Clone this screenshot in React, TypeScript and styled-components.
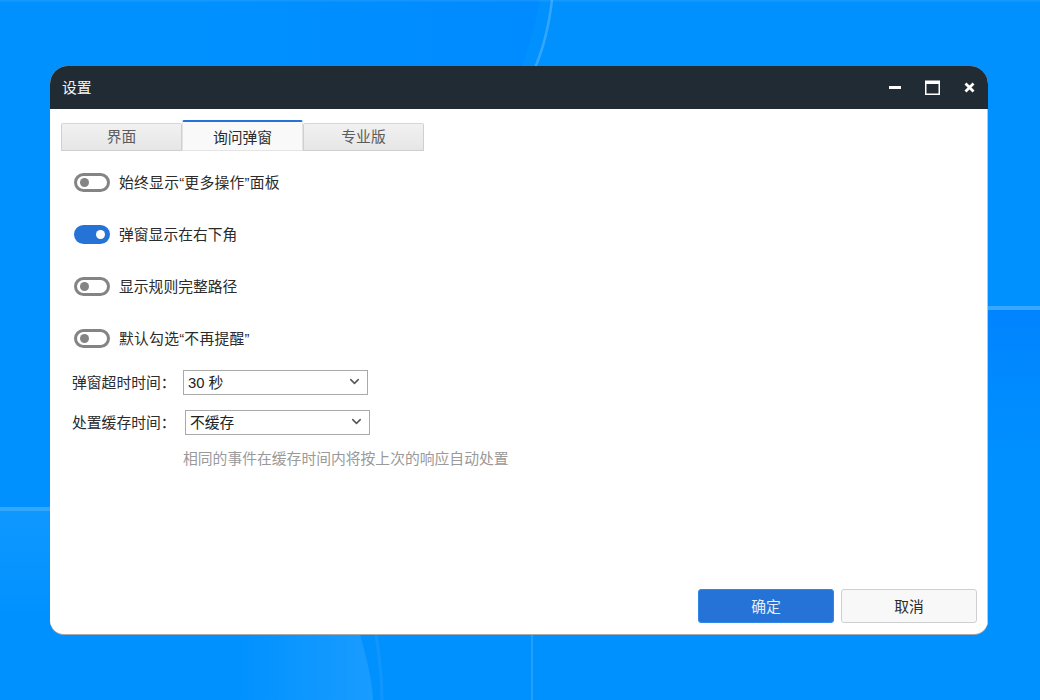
import styled, { createGlobalStyle } from "styled-components";
import { ChevronDown } from "lucide-react";

const GlobalStyle = createGlobalStyle`
  html, body {
    margin: 0;
    padding: 0;
    width: 100%;
    height: 100%;
    overflow: hidden;
  }
  body {
    font-family: "Liberation Sans", "Noto Sans CJK SC", sans-serif;
    font-size: 14.8px;
    color: #2b2b2b;
  }
  * {
    box-sizing: border-box;
  }
`;

const Desktop = styled.div`
  position: relative;
  width: 1040px;
  height: 700px;
  padding: 66px 52px 66px 50px;
  background: #0091ff;
  overflow: hidden;
`;

const Wallpaper = styled.svg`
  position: absolute;
  inset: 0;
  width: 1040px;
  height: 700px;
`;

const Dialog = styled.div`
  position: relative;
  display: flex;
  flex-direction: column;
  height: 568px;
  background: #fff;
  border-radius: 18px 18px 14px 14px;
  box-shadow: 0 1px 0 #a9a9a9;
  overflow: hidden;
`;

const TitleBar = styled.div`
  display: flex;
  align-items: center;
  justify-content: space-between;
  flex: none;
  height: 43px;
  padding: 0 12px;
  background: #212b33;
  color: #f4f4f4;
`;

const WindowTitle = styled.div`
  padding-top: 2px;
  line-height: 41px;
`;

const WindowControls = styled.div`
  display: flex;
  align-items: center;
  gap: 21px;
`;

const ControlIcon = styled.svg`
  display: block;
  width: 15px;
  height: 15px;
  color: #fff;
`;

const Body = styled.div`
  display: flex;
  flex-direction: column;
  flex: 1;
  padding: 11px 10px 11px 11px;
  border-right: 1px solid #c4c4c4;
`;

const TabBar = styled.div`
  display: flex;
  align-items: flex-end;
  height: 31px;
`;

const Tab = styled.div<{ $active?: boolean }>`
  width: 121px;
  height: ${(props) => (props.$active ? "31px" : "28px")};
  display: flex;
  align-items: center;
  justify-content: center;
  padding-bottom: ${(props) => (props.$active ? "0" : "3px")};
  border: 1px solid ${(props) => (props.$active ? "#e4e4e4" : "#cfcfcf")};
  border-top: ${(props) => (props.$active ? "2px solid #2673d8" : "1px solid #d6d6d6")};
  border-radius: 2px 2px 0 0;
  background: ${(props) =>
    props.$active ? "#f9f9f9" : "linear-gradient(#f1f1f1, #e6e6e6)"};
  color: ${(props) => (props.$active ? "#2b2b2b" : "#5c5c5c")};
`;

const Settings = styled.div`
  display: flex;
  flex-direction: column;
  flex: 1;
`;

const ToggleList = styled.div`
  display: flex;
  flex-direction: column;
  gap: 32px;
  padding: 21px 0 0 13px;
`;

const ToggleRow = styled.div`
  display: flex;
  align-items: center;
  gap: 9px;
  height: 20px;
`;

const ToggleLabel = styled.span<{ $quoted?: boolean }>`
  padding-top: 2px;
  line-height: 20px;
  letter-spacing: ${(props) => (props.$quoted ? "0.25px" : "0")};
`;

const Toggle = styled.div<{ $on?: boolean }>`
  position: relative;
  width: 36px;
  height: 19px;
  border-radius: 10px;
  border: 3px solid ${(props) => (props.$on ? "#2673d8" : "#848484")};
  background: ${(props) => (props.$on ? "#2673d8" : "#fff")};

  &::after {
    content: "";
    position: absolute;
    top: 2px;
    left: ${(props) => (props.$on ? "19px" : "3px")};
    width: 9px;
    height: 9px;
    border-radius: 50%;
    background: ${(props) => (props.$on ? "#fff" : "#848484")};
  }
`;

const FormRows = styled.div`
  display: flex;
  flex-direction: column;
  gap: 15px;
  padding: 22px 0 0 11px;
`;

const FormRow = styled.div`
  display: flex;
  align-items: center;
  height: 25px;
`;

const FieldLabel = styled.div`
  width: 96px;
  padding-bottom: 2px;
  white-space: nowrap;
`;

const Select = styled.div<{ $offset: number }>`
  display: flex;
  align-items: center;
  justify-content: space-between;
  width: 185px;
  height: 25px;
  margin-left: ${(props) => props.$offset}px;
  padding: 0 5px 2px 4px;
  border: 1px solid #a9a9a9;
  background: #fff;
  color: #222;

  svg {
    width: 15px;
    height: 15px;
    color: #555;
  }
`;

const Hint = styled.div`
  margin: 14px 0 0 122px;
  color: #9a9a9a;
  line-height: 20px;
  white-space: nowrap;
`;

const Footer = styled.div`
  display: flex;
  justify-content: flex-end;
  gap: 7px;
`;

const Button = styled.div<{ $primary?: boolean }>`
  display: flex;
  align-items: center;
  justify-content: center;
  width: 136px;
  height: 34px;
  padding-bottom: 2px;
  border-radius: 3px;
  border: 1px solid ${(props) => (props.$primary ? "#2e88e8" : "#cfcfcf")};
  background: ${(props) => (props.$primary ? "#2673d8" : "#f8f8f8")};
  color: ${(props) => (props.$primary ? "#e6effb" : "#2b2b2b")};
`;

function Backdrop() {
  return (
    <Wallpaper viewBox="0 0 1040 700" aria-hidden="true">
      <defs>
        <linearGradient id="shade" x1="0" y1="0" x2="0" y2="1">
          <stop offset="0" stopColor="#0080ff" stopOpacity="0.8" />
          <stop offset="1" stopColor="#0086ff" stopOpacity="0" />
        </linearGradient>
        <linearGradient id="topShade" x1="0" y1="0" x2="1" y2="0">
          <stop offset="0" stopColor="#0086ff" stopOpacity="0" />
          <stop offset="1" stopColor="#0086ff" stopOpacity="0.6" />
        </linearGradient>
        <linearGradient id="glow" x1="0" y1="0" x2="1" y2="0">
          <stop offset="0" stopColor="#fff" stopOpacity="0" />
          <stop offset="1" stopColor="#fff" stopOpacity="0.1" />
        </linearGradient>
        <linearGradient id="edgeGlow" x1="0" y1="0" x2="0" y2="1">
          <stop offset="0" stopColor="#fff" stopOpacity="0.06" />
          <stop offset="1" stopColor="#fff" stopOpacity="0" />
        </linearGradient>
      </defs>
      <path d="M200 0 H540 C534 30 528 50 520 70 H200 Z" fill="url(#topShade)" />
      <rect x="988" y="310" width="52" height="170" fill="url(#shade)" />
      <rect x="0" y="511" width="50" height="110" fill="url(#edgeGlow)" />
      <path d="M233 634 H360 C367 660 372 680 373 700 H233 Z" fill="url(#glow)" />
      <path d="M552 0 C549 25 543 50 534 70" fill="none" stroke="#fff" strokeOpacity="0.2" strokeWidth="2.5" />
      <path d="M376 634 C380 660 382 680 382 700" fill="none" stroke="#fff" strokeOpacity="0.06" strokeWidth="3" />
      <rect x="531" y="634" width="2" height="66" fill="#fff" opacity="0.13" />
      <rect x="0" y="507" width="50" height="4" fill="#fff" opacity="0.2" />
      <rect x="988" y="306" width="52" height="4" fill="#fff" opacity="0.22" />
      <rect x="0" y="0" width="1040" height="1.5" fill="#fff" opacity="0.08" />
    </Wallpaper>
  );
}

const toggles = [
  { label: "始终显示“更多操作”面板", on: false, quoted: true },
  { label: "弹窗显示在右下角", on: true, quoted: false },
  { label: "显示规则完整路径", on: false, quoted: false },
  { label: "默认勾选“不再提醒”", on: false, quoted: true },
];

export default function App() {
  return (
    <Desktop>
      <GlobalStyle />
      <Backdrop />
      <Dialog>
        <TitleBar>
          <WindowTitle>设置</WindowTitle>
          <WindowControls>
            <ControlIcon viewBox="0 0 15 15">
              <rect x="0" y="6" width="12" height="3" fill="currentColor" />
            </ControlIcon>
            <ControlIcon viewBox="0 0 15 15">
              <path d="M0 0.5H15V15H0ZM1.5 4V13.5H13.5V4Z" fill="currentColor" fillRule="evenodd" />
            </ControlIcon>
            <ControlIcon viewBox="0 0 15 15">
              <path d="M4.5 3.5L12.5 11.5M12.5 3.5L4.5 11.5" stroke="currentColor" strokeWidth="2.8" />
            </ControlIcon>
          </WindowControls>
        </TitleBar>
        <Body>
          <TabBar>
            <Tab>界面</Tab>
            <Tab $active>询问弹窗</Tab>
            <Tab>专业版</Tab>
          </TabBar>
          <Settings>
            <ToggleList>
              {toggles.map((item) => (
                <ToggleRow key={item.label}>
                  <Toggle $on={item.on} />
                  <ToggleLabel $quoted={item.quoted}>{item.label}</ToggleLabel>
                </ToggleRow>
              ))}
            </ToggleList>
            <FormRows>
              <FormRow>
                <FieldLabel>弹窗超时时间：</FieldLabel>
                <Select $offset={15}>
                  30 秒
                  <ChevronDown strokeWidth={2.4} />
                </Select>
              </FormRow>
              <FormRow>
                <FieldLabel>处置缓存时间：</FieldLabel>
                <Select $offset={17}>
                  不缓存
                  <ChevronDown strokeWidth={2.4} />
                </Select>
              </FormRow>
            </FormRows>
            <Hint>相同的事件在缓存时间内将按上次的响应自动处置</Hint>
          </Settings>
          <Footer>
            <Button $primary>确定</Button>
            <Button>取消</Button>
          </Footer>
        </Body>
      </Dialog>
    </Desktop>
  );
}
